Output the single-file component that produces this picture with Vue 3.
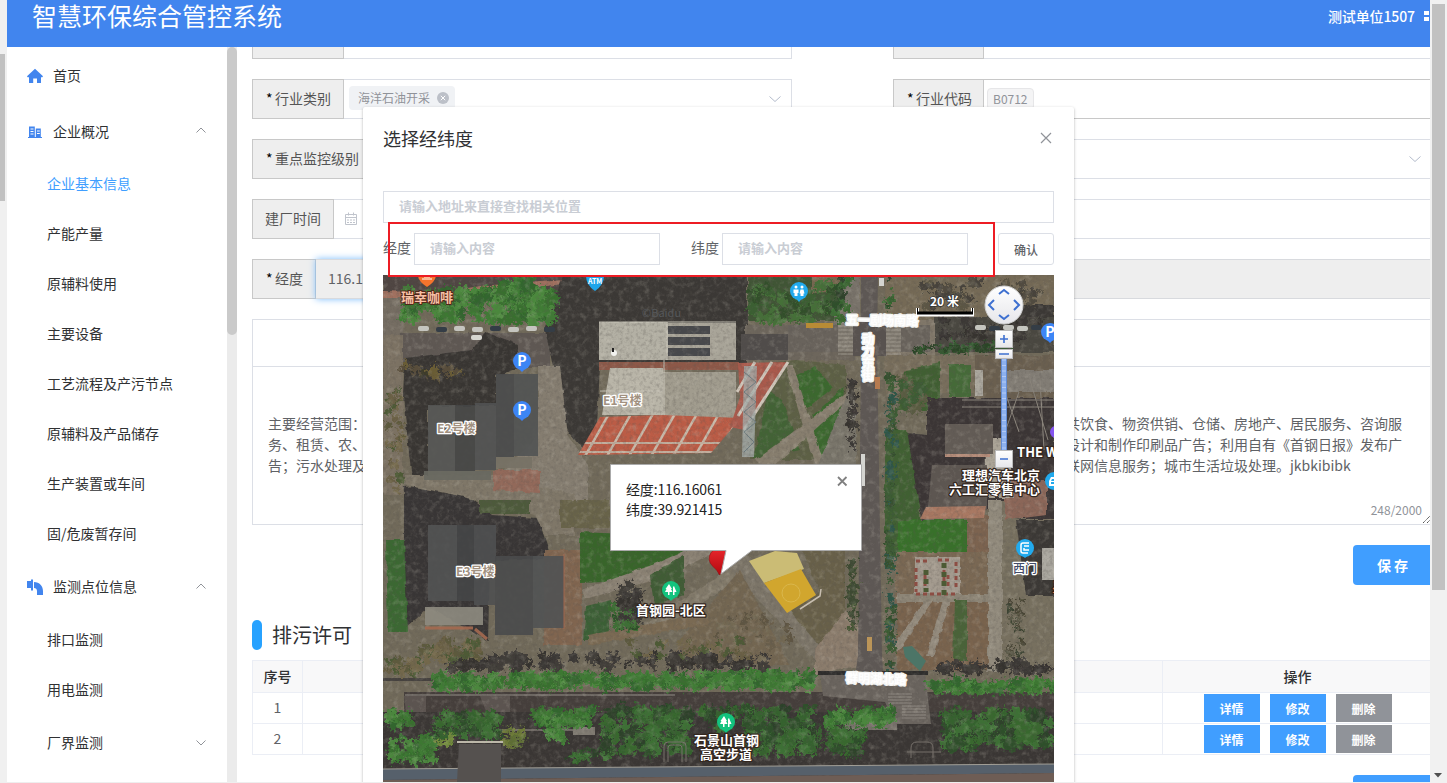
<script setup>
const menu = [
  { text: '首页', kind: 'top', icon: 'home' },
  { text: '企业概况', kind: 'top', icon: 'building', arrow: 'up' },
  { text: '企业基本信息', kind: 'sub', active: true },
  { text: '产能产量', kind: 'sub' },
  { text: '原辅料使用', kind: 'sub' },
  { text: '主要设备', kind: 'sub' },
  { text: '工艺流程及产污节点', kind: 'sub' },
  { text: '原辅料及产品储存', kind: 'sub' },
  { text: '生产装置或车间', kind: 'sub' },
  { text: '固/危废暂存间', kind: 'sub' },
  { text: '监测点位信息', kind: 'top', icon: 'pipe', arrow: 'up' },
  { text: '排口监测', kind: 'sub' },
  { text: '用电监测', kind: 'sub' },
  { text: '厂界监测', kind: 'sub', arrow: 'down', tall: true },
]

const scope = [
  ['主要经营范围：', '共饮食、物资供销、仓储、房地产、居民服务、咨询服'],
  ['务、租赁、农、', '设计和制作印刷品广告；利用自有《首钢日报》发布广'],
  ['告；污水处理及', '联网信息服务；城市生活垃圾处理。jkbkibibk'],
]

let seed = 7
function rnd() {
  seed = (seed * 16807) % 2147483647
  return seed / 2147483647
}

// [x, y, w, h, count, radius, colours]
function scatter(list) {
  const out = []
  for (const [x, y, w, h, n, r, colours] of list) {
    for (let i = 0; i < n; i++) {
      out.push({
        x: (x + rnd() * w).toFixed(1),
        y: (y + rnd() * h).toFixed(1),
        r: (r * (0.5 + rnd() * 0.6)).toFixed(1),
        c: colours[Math.floor(rnd() * colours.length)],
      })
    }
  }
  return out
}

const green = ['#38702f', '#417c36', '#33662d', '#4b883e', '#3c7833']
const deep = ['#2f4f2b', '#36622f', '#3d7034', '#2d432b', '#38682f']
const shade = ['#35312f', '#3b3735', '#403c39']
const dry = ['#6b6045', '#5d5a3c', '#73684c', '#4d5a36']

const trees = scatter([
  [402, 290, 62, 30, 70, 6, green],
  [470, 290, 84, 32, 80, 7, green],
  [498, 279, 34, 18, 22, 7, green],
  [750, 285, 84, 36, 56, 6, ['#3a5f30', '#33502b', '#456f38']],
  [835, 280, 14, 40, 16, 5, deep],
  [388, 660, 40, 14, 20, 5, dry],
  [418, 640, 60, 22, 36, 6, dry],
  [450, 655, 320, 14, 90, 6, shade],
  [434, 675, 70, 13, 70, 5, green],
  [510, 674, 86, 13, 86, 5, green],
  [600, 674, 90, 13, 86, 5, green],
  [694, 674, 122, 13, 120, 5, green],
  [388, 713, 22, 14, 24, 5, green],
  [390, 738, 46, 24, 60, 5, green],
  [435, 714, 64, 22, 64, 6, deep],
  [534, 710, 62, 15, 60, 5, green],
  [546, 730, 20, 14, 14, 5, green],
  [505, 728, 18, 18, 18, 4, ['#6d7a37', '#5f6f34']],
  [436, 736, 20, 8, 10, 4, ['#728c3b']],
  [568, 752, 28, 8, 12, 4, deep],
  [604, 708, 86, 46, 130, 6, deep],
  [700, 708, 42, 20, 36, 5, deep],
  [745, 708, 72, 44, 120, 6, deep],
  [825, 708, 68, 16, 60, 5, green],
  [828, 730, 36, 24, 40, 5, deep],
  [935, 662, 119, 10, 50, 5, shade],
  [928, 681, 126, 11, 100, 5, green],
  [945, 712, 106, 34, 160, 7, deep],
  [886, 278, 6, 40, 10, 3, deep],
  [888, 370, 6, 300, 100, 4, ['#35502f', '#2f5648', '#3c5b34']],
  [850, 380, 5, 70, 22, 4, shade],
  [850, 560, 5, 70, 24, 4, ['#4b5a38', '#3c4a30']],
  [612, 602, 24, 26, 26, 5, deep],
  [620, 585, 22, 34, 26, 5, shade],
  [400, 365, 60, 12, 26, 4, ['#584e3a', '#6b5d34', '#3c3b2c']],
  [388, 390, 14, 100, 30, 4, dry],
  [910, 345, 100, 8, 42, 4, ['#345a30', '#2c4428']],
  [940, 318, 100, 22, 42, 5, shade],
  [920, 282, 120, 26, 44, 5, ['#514c3f', '#46433a', '#5c5644']],
  [900, 380, 24, 30, 30, 5, ['#3e5b34', '#5a5c42']],
  [1008, 600, 14, 56, 34, 3, ['#484534', '#5c5a48', '#3a4330']],
  [715, 615, 76, 44, 34, 4, ['#6a5f4c', '#5f5542', '#736953']],
  [630, 640, 120, 16, 30, 4, dry],
])

const cars = []
for (const [x0, y, n, step] of [[418, 326, 8, 18], [975, 325, 5, 14]]) {
  for (let i = 0; i < n; i++) {
    cars.push({ x: x0 + i * step, y: y + (i % 2), c: i % 3 === 1 ? '#343d46' : '#c5c5bf' })
  }
}
const roofBars = [0, 1, 2, 3, 4, 5, 6]
const zebra = Array.from({ length: 9 }, (_, i) => i)
const ticks = Array.from({ length: 17 }, (_, i) => i)
const tableRows = [1, 2]
</script>

<template>
  <div class="page">
    <div class="left-gutter"><i class="gutter-thumb"></i></div>
    <div class="app">
      <header class="header">
        <h1>智慧环保综合管控系统</h1>
        <div class="user">
          <span>测试单位1507</span>
          <svg width="6" height="12" viewBox="0 0 6 12"><path d="M0 1h5v4H0zM0 7h5v4H0z" fill="#fff" /></svg>
        </div>
      </header>

      <div class="body">
        <nav class="side">
          <div
            v-for="m in menu"
            :key="m.text"
            :class="['item', m.kind, { active: m.active, tall: m.tall }]"
          >
            <svg v-if="m.icon === 'home'" class="ico" viewBox="0 0 16 16"><path d="M8 .8 16 8.3l-.7.9H14V15h-4v-4.5H6.2V15H2V9.200H.6L0 8.300z" fill="#4285ee" /></svg>
            <svg v-else-if="m.icon === 'building'" class="ico" viewBox="0 0 16 16">
              <path d="M2 2.500h5.800V13H2zM8.800 4.500h5V13h-5zM1 13h14v1H1z" fill="#4285ee" />
              <path d="M3.500 5h3M3.500 7.500h3M3.500 10h3M10 7h2.800M10 9.500h2.800" stroke="#fff" />
            </svg>
            <svg v-else-if="m.icon === 'pipe'" class="ico" viewBox="0 0 16 16"><path d="M0 2h4V.5h2v11H4V9H0zM7 3c5.500 0 9 4 9 9v4h-6v-4c0-1.800-1.200-3-3-3z" fill="#4285ee" /></svg>
            <span>{{ m.text }}</span>
            <svg v-if="m.arrow" class="arrow" viewBox="0 0 12 12">
              <path :d="m.arrow === 'up' ? 'M1.500 7.500 6 3l4.500 4.500' : 'M1.500 3.500 6 8l4.500-4.500'" fill="none" stroke="#909399" />
            </svg>
          </div>
        </nav>
        <div class="side-track"><i></i></div>

        <main class="content">
          <div class="form">
            <div class="row cut"><div class="label w92"></div><div class="field"></div></div>
            <div class="row cut"><div class="label w91"></div><div class="field"></div></div>

            <div class="row">
              <div class="label w92"><b>*</b>行业类别</div>
              <div class="field">
                <span class="tag">海洋石油开采
                  <svg width="12" height="12" viewBox="0 0 12 12"><circle cx="6" cy="6" r="6" fill="#bcc0c8" /><path d="M3.800 3.800l4.400 4.400M8.200 3.800l-4.400 4.400" stroke="#fff" /></svg>
                </span>
                <svg class="caret" viewBox="0 0 12 12"><path d="M.5 3.500 6 8.500l5.500-5" fill="none" stroke="#b4bccc" /></svg>
              </div>
            </div>
            <div class="row">
              <div class="label w91"><b>*</b>行业代码</div>
              <div class="field dark"><span class="tag plain">B0712</span></div>
            </div>

            <div class="row"><div class="label w120"><b>*</b>重点监控级别</div><div class="field"></div></div>
            <div class="row">
              <div class="label w91"></div>
              <div class="field">
                <svg class="caret" viewBox="0 0 12 12"><path d="M.5 3.500 6 8.500l5.500-5" fill="none" stroke="#b4bccc" /></svg>
              </div>
            </div>

            <div class="row">
              <div class="label w82">建厂时间</div>
              <div class="field">
                <svg class="cal" viewBox="0 0 14 14"><path d="M1.500 2.500h11v10h-11zM1.500 5.500h11M4.500 .500v3M9.500 .500v3M3 8h2M6 8h2M9 8h2M3 10.500h2M6 10.500h2M9 10.500h2" fill="none" stroke="#c0c4cc" /></svg>
              </div>
            </div>
            <div class="row"><div class="label w91"></div><div class="field"></div></div>

            <div class="row"><div class="label w64"><b>*</b>经度</div><div class="field grey glow">116.16061</div></div>
            <div class="row"><div class="label w64"></div><div class="field grey"></div></div>
          </div>

          <section class="scope">
            <div class="scope-head"></div>
            <div class="scope-text">
              <p v-for="line in scope" :key="line[0]"><span>{{ line[0] }}</span><span class="tail">{{ line[1] }}</span></p>
            </div>
            <span class="count">248/2000</span>
            <svg class="grip" viewBox="0 0 8 8"><path d="M0 8l8-8M4 8l4-4" stroke="#555" stroke-dasharray="1.400 .4" /></svg>
          </section>

          <button class="save">保存</button>
          <h2 class="section-title"><i></i>排污许可</h2>

          <div class="table">
            <div class="tr th"><div>序号</div><div></div><div>操作</div></div>
            <div v-for="n in tableRows" :key="n" class="tr">
              <div>{{ n }}</div><div></div>
              <div class="ops"><button>详情</button><button>修改</button><button class="del">删除</button></div>
            </div>
          </div>
          <button class="save next"></button>
        </main>
      </div>
    </div>
    <div class="right-scroll"><i></i><svg viewBox="0 0 8 5"><path d="M0 0h8L4 4.500z" fill="#505050" /></svg></div>

    <div class="dialog">
      <div class="dialog-head">
        <span>选择经纬度</span>
        <svg width="12" height="12" viewBox="0 0 12 12"><path d="M1 1l10 10M11 1 1 11" stroke="#909399" stroke-width="1.200" /></svg>
      </div>
      <div class="input addr">请输入地址来直接查找相关位置</div>
      <div class="coords">
        <label>经度</label><div class="input">请输入内容</div>
        <label class="lat">纬度</label><div class="input">请输入内容</div>
        <button>确认</button>
      </div>

      <svg class="map" viewBox="383 275 671 507">
        <defs>
          <filter id="grain" x="0" y="0" width="100%" height="100%">
            <feTurbulence type="fractalNoise" baseFrequency="0.300" numOctaves="3" seed="4" />
            <feColorMatrix values="0 0 0 0 .1  0 0 0 0 .09  0 0 0 0 .08  2.200 0 0 0 -.950" />
          </filter>
          <filter id="light" x="0" y="0" width="100%" height="100%">
            <feTurbulence type="fractalNoise" baseFrequency="0.160" numOctaves="4" seed="11" />
            <feColorMatrix values="0 0 0 0 .78  0 0 0 0 .74  0 0 0 0 .64  0 2.400 0 0 -1.200" />
          </filter>
          <filter id="rough" x="-5%" y="-5%" width="110%" height="110%">
            <feTurbulence type="fractalNoise" baseFrequency="0.120" numOctaves="2" seed="3" />
            <feDisplacementMap in="SourceGraphic" scale="4" xChannelSelector="R" yChannelSelector="G" />
          </filter>
          <filter id="leaf" x="-5%" y="-5%" width="110%" height="110%">
            <feTurbulence type="fractalNoise" baseFrequency="0.260" numOctaves="3" seed="8" />
            <feDisplacementMap in="SourceGraphic" scale="13" xChannelSelector="R" yChannelSelector="G" />
          </filter>
          <linearGradient id="pin" x1="0" x2="0" y1="0" y2="1"><stop offset="0" stop-color="#e8272d" /><stop offset="1" stop-color="#b3090e" /></linearGradient>
          <linearGradient id="knob" x1="0" x2="0" y1="0" y2="1"><stop offset="0" stop-color="#fff" /><stop offset="1" stop-color="#e6e6ea" /></linearGradient>
          <clipPath id="redroof"><path d="M600 417l63-2 78 3-30 35-133 2z" /></clipPath>
        </defs>

        <rect x="383" y="275" width="671" height="507" fill="#716a5a" />

        <g filter="url(#rough)">
          <!-- north-west block -->
          <path d="M383 275h180v22H383z" fill="#504542" />
          <path d="M383 291l60 2 50-8 70-6v5l-70 8-50 8-60-2z" fill="#a0705f" />
          <path d="M383 298h20v40h-20z" fill="#756d62" />
          <path d="M400 333h150v34H400z" fill="#5f5953" />
          <path d="M383 335h20v160h-20z" fill="#7b7263" />
          <path d="M563 275h184v90H600l-3 60-10 30-20-25-22-100z" fill="#3a3735" />
          <path d="M473 350l12-18 33 12v24l-22 8v30h-68v70l-16 5-9-85 2-38z" fill="#393533" />
          <path d="M538 366h22l8 70 20 30v40h-90v-30l40-40z" fill="#857d6f" />
          <path d="M404 487l48-4 40 32 46 3 12 36-8 5-52 2-2 80-60-34-24 22z" fill="#393634" />
          <path d="M405 475h90l80 20v40h-30l-10-20-80-20-50-10z" fill="#7f7768" />
          <path d="M493 470h47v23l-47-3z" fill="#92695a" />
          <path d="M560 500h50v28h-50z" fill="#67634a" />
          <path d="M480 500h50v14h-50z" fill="#4d5a3a" />
          <path d="M386 540h18l4 92h-20z" fill="#3a6831" />
          <path d="M544 550h38v95h-38z" fill="#80654f" />
          <path d="M580 532l140 6-30 24-60 19-50 2z" fill="#38652c" />
          <path d="M582 590l70-25 70-30 3 12-60 30-80 22z" fill="#8a8173" />
          <path d="M650 575l34-20v40l-30 10z" fill="#3f5c34" />
          <path d="M640 628l90-60 14 8-90 58z" fill="#827a6b" />
          <path d="M720 560l20-15 90 115-10 5z" fill="#7c7567" />
          <path d="M740 570l-60 70-10 25h120z" fill="#736651" />
          <path d="M583 640h25l3-40-25 6z" fill="#3b5f34" />
          <path d="M588 635l120-22v12l-120 20z" fill="#7a6a52" />
          <!-- plaza wedge -->
          <path d="M750 365l46-5 50 5v95h-96z" fill="#5d6145" />
          <path d="M795 376l20-10 18 22-26 20zM812 416l31-28-4 48-20 34z" fill="#3b682f" />
          <path d="M768 390l14 10 18 50-46 10z" fill="#436334" />
          <path d="M785 365h8l33 105h-10z" fill="#877e6e" />
          <path d="M755 460l95-70v8l-80 72z" fill="#877e6e" />
          <path d="M818 465l30-75 8 5v75z" fill="#79756a" />
          <path d="M745 325h110v35H745z" fill="#6d665c" />
          <path d="M748 275h90v46h-90z" fill="#415435" />
          <path d="M812 275h34v16l-34 2z" fill="#77674f" />
          <path d="M846 275h14v60h-30z" fill="#79736b" />
          <path d="M800 545l45 2v70l-25 30-33-40 33-15z" fill="#676149" />
          <path d="M815 650l30-40 40 50-70 15z" fill="#8b7b6c" />
          <!-- north-east -->
          <path d="M885 275h169v50H885z" fill="#746a57" />
          <path d="M1005 305h49v14h-49z" fill="#3a3735" />
          <path d="M885 320h50v45h-50z" fill="#807769" />
          <path d="M935 317h119v35H935z" fill="#4a4741" />
          <path d="M885 355h90v38h-90z" fill="#786e5b" />
          <path d="M903 371l37-9v48h-42z" fill="#415e33" />
          <path d="M949 365h22v32h-22z" fill="#446b38" />
          <path d="M975 355h79v45h-79z" fill="#6b5e4f" />
          <path d="M1000 370h54v22h-54z" fill="#827d75" />
          <path d="M927 398h127v110H950l-27 12-18-60V433l22 2z" fill="#3a3534" />
          <path d="M885 430h22l14 90h46v34h-82z" fill="#3f6132" />
          <path d="M898 520h69v33h-69z" fill="#37702c" />
          <path d="M967 515h23v40h-23z" fill="#7c634f" />
          <path d="M895 552h96v50h-96z" fill="#7a6852" />
          <path d="M915 557h45v40h-45z" fill="#a39a8e" />
          <path d="M897 600h92v70h-92z" fill="#79634d" />
          <path d="M925 600h8l-35 52-6-4zM943 600h8l-18 56h-7z" fill="#938a7c" />
          <path d="M897 594h95v8h-95z" fill="#8d8576" />
          <path d="M955 600h12v60h-14z" fill="#496339" />
          <path d="M988 500h14v172h-14z" fill="#918a7c" />
          <path d="M1002 500h52v170h-52z" fill="#77705f" />
          <path d="M1016 520h38v76h-28z" fill="#3b3735" />
          <path d="M1005 480h43v38h-43z" fill="#8b6659" />
          <path d="M1015 519h39v-28h-7v24z" fill="#3b3635" />
          <path d="M985 438h20l10 60h-28z" fill="#aba497" />
        </g>

        <!-- roads -->
        <path d="M861 275h17l-1 70 5 310 4 60h-36l8-60 3-300z" fill="#5e5855" />
        <path d="M788 325h142v27H788z" fill="#69635c" />
        <path d="M838 320h16v32h-16zM885 322h16v30h-16z" fill="#7f796f" />
        <path v-for="z in zebra" :key="'z' + z" :d="`M838 ${322 + z * 4}h15M886 ${322 + z * 4}h15`" stroke="#a09a8f" stroke-width="1" />
        <path d="M853 322h33v34h-33z" fill="#58524f" />

        <!-- east buildings -->
        <path d="M945 424h48v30h-48z" fill="#635c56" />
        <path d="M945 454h45v3h-45z" fill="#b68d7a" />
        <path d="M932 465h55v45l-60 7z" fill="#5d5651" />
        <path d="M926 507l60-1-2 12-64 1z" fill="#a87862" />
        <path d="M1042 548h12v32h-12z" fill="#aaa79f" />
        <path d="M975 370h8v26h-8z" fill="#aaa69d" />
        <path d="M962 400h92M962 407h92M1005 392l14 40M1019 392l-14 40M1040 380l4 70M1030 380l18 60" stroke="#8b857c" fill="none" />

        <!-- E1 roofs -->
        <path d="M599 322h69v38h-69z" fill="#b3b0a4" />
        <path d="M668 323h68v37h-68z" fill="#a8a498" />
        <path d="M668 326h42v8h-42zM668 337h42v8h-42zM668 348h42v8h-42z" fill="#47484b" />
        <path d="M599 362h140v8H599z" fill="#8d5848" />
        <path d="M610 368h53v47h-61z" fill="#b9b5a8" /><path d="M663 372h73v46h-73z" fill="#a19c8e" />
        <path d="M600 391h63M664 360v56M667 322v38M599 322h137" stroke="#c8c4b8" fill="none" />
        <path d="M741 334h47v26h-47z" fill="#504c4a" />
        <path d="M600 417l63-2 78 3-30 35-133 2z" fill="#bb5c46" />
        <g clip-path="url(#redroof)">
          <path v-for="b in roofBars" :key="'r' + b" :d="`M${610 + b * 22} 412l-26 46`" stroke="#c9b9a9" stroke-width="2.500" />
          <path d="M583 443h140M575 452h140" stroke="#c2ae9d" stroke-width="2" />
        </g>
        <path d="M738 363l50-1-44 68-14-3 10-30z" fill="#aa5a4c" />
        <path d="M788 362l-44 68M772 362l-34 54M755 362l-18 30" stroke="#d0c6ba" stroke-width="3" />
        <path d="M744 366h13l-3 91h-12z" fill="#a2aaa8" opacity=".8" />
        <path d="M744 372l12 10-12 10 12 10-12 10 12 10-12 10 10 10-10 10" stroke="#6d7c80" fill="none" />

        <!-- south side -->
        <path d="M383 678h50v3h-50z" fill="#45413e" />
        <path d="M404 692h650v24H404z" fill="#453e3b" />
        <path d="M404 696h22v30h-18zM480 696h30v20h-22z" fill="#5c5450" />
        <path d="M383 712h671v70H383z" fill="#3a3634" />
        <path d="M405 695h270M495 730h100" stroke="#6e6863" stroke-width="2" />
        <path d="M820 674h105l6 50H895l-10-22-62-6z" fill="#6a645e" />
        <path d="M818 671h110v4H818z" fill="#2e2d2c" />
        <path v-for="z in zebra" :key="'s' + z" :d="`M${z < 4 ? 888 : 902} ${694 + z * 3}h24`" stroke="#908a83" />
        <path d="M845 718h52v12h-52z" fill="#77716a" /><path d="M573 727h22v8h-22z" fill="#807b72" />

        <g filter="url(#leaf)">
          <circle v-for="(t, i) in trees" :key="i" :cx="t.x" :cy="t.y" :r="t.r" :fill="t.c" />
        </g>

        <rect x="383" y="275" width="671" height="507" filter="url(#grain)" opacity=".32" />
        <rect x="383" y="275" width="671" height="507" filter="url(#light)" opacity=".2" />

        <!-- E2 / E3 -->
        <g opacity=".9">
          <path d="M428 405h27v66h-27z" fill="#555655" /><path d="M455 405h20v66h-20z" fill="#454646" /><path d="M475 403h21v67h-21z" fill="#515253" />
          <path d="M496 374h18v84h-18z" fill="#4a4b4c" /><path d="M514 374h24v82h-24z" fill="#525454" />
          <path d="M424 471h67v9h-67z" fill="#696961" /><path d="M496 457h36v11h-36z" fill="#777266" />
          <path d="M428 525h29v76h-29z" fill="#535454" /><path d="M457 525h17v76h-17z" fill="#454647" /><path d="M474 525h22v80h-22z" fill="#4f5051" />
          <path d="M495 556h38v79h-38z" fill="#4a4b4c" /><path d="M533 556h31v72h-31z" fill="#515354" />
          <path d="M425 607h58v18h-58z" fill="#8e8b80" />
          <path d="M425 628h48M475 629l12 10" stroke="#a56a50" stroke-width="3" />
        </g>
        <path d="M564 554v75" stroke="#a0664e" />
        <circle cx="614" cy="353" r="3" fill="#f2f2ee" /><path d="M613 348v4" stroke="#222" stroke-width="2" />

        <path d="M383 769l671-5v9l-671 7z" fill="#56606b" />
        <path d="M383 780l671-7v9H383z" fill="#6e5d55" />
        <path d="M383 769l671-5" stroke="#a29f97" />
        <path d="M459 744h42v38h-44z" fill="#55514f" /><path d="M457 742h46" stroke="#bcb7a9" stroke-width="2" />
        <g fill="none" stroke="#77716b"><path d="M664 762v-16q0-4 4-4h14q4 0 4 4v16M668 762v-14q0-3 3-3h8q3 0 3 3v14M911 758v-10q0-6 6-6h10q6 0 6 6v10M907 752h34M898 722v-4h20v4" /></g>

        <!-- yellow court -->
        <path d="M749 561l26-10 22 2 7 16-40 14z" fill="#cbbc75" />
        <path d="M764 583l37-14 15 26-29 18z" fill="#d1a62e" />
        <circle cx="791" cy="593" r="9" fill="none" stroke="#dab74c" />
        <path d="M800 609l20-13 1-7" fill="none" stroke="#c7beb0" stroke-width="1.500" />

        <!-- plaza pattern -->
        <path d="M916 561h14M916 568v24M916 594h40M938 560h14M956 562v28M925 575v14M944 563v20M948 575v14" stroke="#8c4d43" stroke-width="3" stroke-dasharray="4 3" fill="none" />
        <path d="M944 563v32M926 570v22" stroke="#4c5a34" stroke-width="5" stroke-dasharray="5 4" />
        <path d="M903 647l9-1 14 15-6 10-15-14z" fill="#4c7567" />
        <g><rect v-for="(c, i) in cars" :key="'c' + i" :x="c.x" :y="c.y" width="11" height="5" rx="2" :fill="c.c" /></g>
        <rect x="471" y="335" width="11" height="5" rx="2" fill="#d6d6d0" />
        <rect x="806" y="323" width="27" height="5" fill="#b88b35" />
        <rect x="867" y="637" width="5" height="14" fill="#bb9558" />
        <rect x="875" y="377" width="5" height="12" fill="#b67b50" />
        <rect x="879" y="278" width="5" height="8" fill="#d4d4d0" />
        <path d="M863 454v32" stroke="#d4d4d0" stroke-width="4" />

        <!-- road names -->
        <g class="road">
          <text x="846" y="324" transform="rotate(1 846 324)">五一剧场南路</text>
          <text x="868" y="333" class="down">动力东街</text>
          <text x="846" y="682" transform="rotate(2 846 682)">群明湖北路</text>
        </g>
        <text x="642" y="317" class="mark">©Baidu</text>
        <g class="bldg"><text x="603" y="405">E1号楼</text><text x="437" y="433">E2号楼</text><text x="456" y="576">E3号楼</text></g>

        <!-- points of interest -->
        <path d="M418 276h18q-1 6-9 11-8-5-9-11z" fill="#f4742d" /><path d="M422 279h10M424 277h6" stroke="#fff" />
        <text x="401" y="302" class="cafe">瑞幸咖啡</text>
        <path d="M586 276h18q0 9-9 15-9-6-9-15z" fill="#1ea5ea" /><text x="588" y="284" class="atm">ATM</text>
        <g v-for="p in [[522, 361], [522, 410], [1050, 332]]" :key="p.join()">
          <path :d="`M${p[0] - 7} ${p[1] + 4}h14l-7 7z`" fill="#3b82f6" /><circle :cx="p[0]" :cy="p[1]" r="9" fill="#3d85f5" />
          <text :x="p[0]" :y="p[1] + 5" class="park">P</text>
        </g>
        <path d="M793 295h12l-6 7z" fill="#22aaed" /><circle cx="799" cy="291" r="9" fill="#22aaed" />
        <g fill="#fff"><circle cx="796" cy="287" r="1.500" /><circle cx="802" cy="287" r="1.500" /><path d="M793.500 289.500h5v3.500h-1v3h-3v-3h-1zM799.500 293.500l1-4h3l1 4h-1v2.500h-3v-2.500z" /></g>
        <g v-for="p in [[671, 590], [726, 722]]" :key="p.join()">
          <path :d="`M${p[0] - 6} ${p[1] + 5}h12l-6 6z`" fill="#13c37e" /><circle :cx="p[0]" :cy="p[1]" r="9" fill="#13c37e" />
          <path :d="`M${p[0] - 2} ${p[1] - 6}l3 5h-1l1.500 3h-3v3h-1.500v-3h-3l1.500-3h-1zM${p[0] + 3} ${p[1] - 4}l2.500 6h-2v3h-1.500v-8z`" fill="#fff" />
        </g>
        <path d="M1019 553h12l-6 5z" fill="#22aaed" /><circle cx="1025" cy="548" r="9" fill="#22aaed" /><path d="M1029 543h-6q-2 0-2 2v6q0 2 2 2h5M1024 546h5M1024 548v2h5" fill="none" stroke="#fff" stroke-width="1.500" />
        <circle cx="1056" cy="432" r="6" fill="#8555f0" />
        <circle cx="1054" cy="481" r="9" fill="#22aaed" /><path d="M1049 486v-5l2-4h4v2h-3l-1 2h4v1h-4v2h4v2z" fill="#fff" />
        <g class="place">
          <text x="636" y="615">首钢园-北区</text><text x="694" y="745">石景山首钢</text><text x="700" y="759">高空步道</text>
          <text x="1017" y="457">THE WI</text><text x="962" y="480">理想汽车北京</text><text x="949" y="494">六工汇零售中心</text>
        </g>
        <text x="1013" y="573" class="gate">西门</text>
        <text x="1052" y="592" class="edge">星</text>

        <!-- scale and zoom controls -->
        <text x="930" y="306" class="scale">20 米</text>
        <path d="M917.500 308v7h55v-7" fill="none" stroke="#fff" stroke-width="3" /><path d="M917.500 308v5h55v-5" fill="none" stroke="#000" /><path d="M917 313h56" stroke="#000" stroke-width="3" />
        <circle cx="1004" cy="305" r="19" fill="url(#knob)" stroke="#d2d2d2" />
        <path d="M999 294l5-4 5 4M999 315l5 4 5-4M994 300l-5 5 5 5M1014 300l5 5-5 5" fill="none" stroke="#3e70d0" stroke-width="2" />
        <rect x="1001.500" y="352" width="5" height="104" fill="#8db1ee" stroke="#638cd4" />
        <path v-for="t in ticks" :key="'t' + t" :d="`M1002 ${360 + t * 5.500}h4`" stroke="#b3cbf7" />
        <g fill="url(#knob)" stroke="#bbb"><rect x="995.500" y="330.500" width="17" height="17" /><rect x="995.500" y="349.500" width="17" height="9" /><rect x="995.500" y="450.500" width="17" height="17" /></g>
        <path d="M1000 339h8M1004 335v8M999 354h10M1000 459h8" stroke="#3e70d0" stroke-width="1.600" />

        <!-- marker and info window -->
        <path d="M719.500 575q-2-5-7-9a10 10 0 1 1 16-4q-4 8-9 13z" fill="url(#pin)" stroke="#8e1114" stroke-width=".6" />
        <path d="M610.500 464.500h251v86H752L721 574l5-23.500H610.500z" fill="#fff" stroke="#aaa" />
        <g class="info"><text x="626" y="495">经度:116.16061</text><text x="626" y="515">纬度:39.921415</text></g>
        <path d="M838 477l8.500 8.500M846.500 477l-8.500 8.500" stroke="#808080" stroke-width="1.800" />
      </svg>
      <div class="frame"></div>
    </div>
    <div class="bottom-line"></div>
  </div>
</template>

<style>
body { overflow: hidden; }
</style>

<style scoped>
.page {
  position: relative;
  display: flex;
  width: 1447px;
  height: 783px;
  overflow: hidden;
  background: #fff;
  color: #606266;
  font: 14px/20px "Noto Sans CJK SC", "Noto Sans", sans-serif;
}
.page *, .page *::before { box-sizing: border-box; }
h1, h2, p { margin: 0; font-weight: 400; }
button { font-family: inherit; padding: 0; border: 0; }
.left-gutter { width: 7px; background: #f0f0f0; }
.gutter-thumb { display: block; width: 5px; height: 147px; margin-top: 54px; background: #c1c1c1; }
.app { width: 1423px; overflow: hidden; display: flex; flex-direction: column; }
.header {
  height: 47px;
  flex: none;
  background: #4185ee;
  color: #fff;
  display: flex;
  justify-content: space-between;
  padding-left: 25px;
}
.header h1 { font-size: 25px; line-height: 31px; }
.user { display: flex; align-items: center; gap: 9px; height: 32px; font-weight: 500; }
.user span { letter-spacing: -.1px; }
.body { display: flex; flex: 1; min-height: 0; }
.side { width: 220px; padding-top: 1px; color: #303133; overflow: hidden; }
.item { display: flex; align-items: center; height: 50px; padding-left: 41px; }
.item span { margin: -2px 0 0 -1px; }
.item.top { height: 56px; padding-left: 20px; }
.item.top:nth-child(2) { height: 55px; }
.item.tall { height: 56px; }
.item.active { color: #409eff; }
.ico { width: 16px; height: 16px; margin-right: 11px; }
.arrow { width: 12px; height: 12px; margin: -1px 20px 0 auto; }
.side-track { width: 10px; background: #ebebeb; }
.side-track i { display: block; height: 288px; border-radius: 5px; background: #cacaca; }
.content { width: 1193px; padding-left: 15px; overflow: hidden; }
.form { display: grid; grid-template-columns: 540px 560px; column-gap: 101px; row-gap: 20px; }
.row { display: flex; height: 40px; }
.row.cut { height: 12px; }
.row.cut > * { border-top: 0; }
.label {
  flex: none;
  display: flex;
  align-items: center;
  padding: 0 0 2px 12px;
  border: 1px solid #c8c8c8;
  background: #eee;
  color: #555;
}
.label b { width: 10px; padding-left: 1px; margin-top: -1px; color: #000; font-weight: 400; }
.w92 { width: 92px; } .w91 { width: 91px; } .w82 { width: 82px; } .w64 { width: 64px; } .w120 { width: 120px; }
.field { flex: 1; display: flex; align-items: center; border: 1px solid #dcdfe6; border-left: 0; position: relative; }
.field.dark { border-color: #c8c8c8; }
.field.grey { background: #eee; border-color: #d8dade; padding: 0 0 2px 12px; }
.field.glow { box-shadow: 0 0 7px #7bbcfb; }
.tag {
  display: flex;
  align-items: center;
  gap: 7px;
  height: 24px;
  margin: -3px 0 0 5px;
  padding: 0 6px 0 9px;
  border-radius: 4px;
  background: #f0f2f5;
  color: #909399;
  font-size: 12px;
}
.tag.plain { height: 22px; margin: 0 0 0 3px; padding: 0 5px; background: #f4f4f5; border: 1px solid #e6e6e8; }
.caret { width: 12px; height: 12px; margin: 0 10px 0 auto; }
.row:nth-child(6) .caret { margin-right: 31px; }
.cal { width: 14px; height: 14px; margin-left: 10px; }
.scope { position: relative; width: 1201px; height: 206px; margin-top: 20px; border: 1px solid #dcdfe6; }
.scope-head { height: 47px; border-bottom: 1px solid #dcdfe6; }
.scope-text { padding: 46px 0 0 15px; }
.scope-text p { display: flex; line-height: 21px; white-space: nowrap; }
.scope-text span { width: 798px; }
.scope-text .tail { width: auto; }
.count { position: absolute; right: 30px; bottom: 4px; font-size: 12px; color: #909399; }
.grip { position: absolute; left: 1170px; bottom: 1px; width: 8px; height: 8px; }
.save {
  display: block;
  width: 90px;
  height: 40px;
  margin: 20px 0 0 1101px;
  padding: 0 0 1px 24px;
  border-radius: 4px;
  background: #409eff;
  color: #fff;
  font-size: 14px;
  font-weight: 700;
  letter-spacing: 3px;
  text-align: left;
}
.section-title { display: flex; align-items: center; gap: 10px; height: 30px; margin-top: 35px; padding-bottom: 0; font-size: 20px; color: #303133; }
.section-title i { width: 10px; height: 30px; border-radius: 5px; background: #27a2ff; }
.table { width: 1180px; margin-top: 10px; border: 1px solid #ebeef5; border-width: 1px 0 0 1px; }
.tr { display: grid; grid-template-columns: 50px 860px 270px; height: 31px; }
.tr > div { display: flex; align-items: center; justify-content: center; padding-bottom: 2px; border: 1px solid #ebeef5; border-width: 0 1px 1px 0; }
.tr.th { height: 32px; background: #f8f8f9; color: #303133; font-weight: 500; }
.tr > .ops { gap: 10px; padding-bottom: 0; }
.ops button { width: 56px; height: 28px; background: #409eff; color: #fff; font-size: 12px; font-weight: 700; }
.ops .del { background: #909399; }
.right-scroll { width: 17px; background: #f1f1f1; padding: 4px 2px 0; position: relative; }
.right-scroll i { display: block; height: 586px; width: 13px; background: #c1c1c1; }
.right-scroll svg { position: absolute; left: 4px; bottom: 5px; width: 8px; height: 5px; }
.dialog {
  position: absolute;
  left: 363px;
  top: 107px;
  width: 711px;
  height: 690px;
  padding: 0 20px;
  background: #fff;
  border-radius: 2px;
  box-shadow: 0 1px 3px rgba(0, 0, 0, .3);
}
.dialog-head { display: flex; align-items: center; justify-content: space-between; height: 62px; padding-right: 2px; font-size: 18px; color: #303133; }
.input { border: 1px solid #dcdfe6; height: 32px; line-height: 27px; padding-left: 15px; font-size: 13px; font-weight: 700; color: #c9cdd4; }
.addr { margin-top: 22px; }
.coords { display: flex; align-items: center; margin-top: 10px; }
.coords label { width: 31px; line-height: 28px; height: 32px; }
.coords .lat { margin-left: 31px; }
.coords .input { width: 246px; }
.coords button { width: 56px; height: 32px; margin-left: auto; border: 1px solid #dcdfe6; border-radius: 3px; background: #fff; color: #606266; font-size: 12px; font-weight: 500; }
.map { display: block; width: 671px; height: 507px; margin-top: 10px; }
.map text { font-family: "Noto Sans CJK SC", sans-serif; font-size: 12px; paint-order: stroke; stroke-linejoin: round; }
.road text { font-weight: 700; fill: #fff; stroke: #f4f4f2; stroke-width: 3px; }
.road .down { writing-mode: vertical-rl; }
.map .mark { fill: #56585a; font-size: 11px; }
.bldg text { fill: #a29180; stroke: #fff; stroke-width: 2.500px; font-weight: 700; }
.map .cafe { font-size: 13px; font-weight: 700; fill: #f7c0a5; stroke: #52271a; stroke-width: 2px; }
.map .atm { font-size: 7px; font-weight: 700; fill: #fff; }
.map .park { font-size: 14px; font-weight: 700; fill: #fff; text-anchor: middle; }
.place text { font-size: 13px; font-weight: 700; fill: #fff; stroke: #33261e; stroke-width: 2.500px; }
.map .gate { font-size: 12px; font-weight: 500; fill: #424b68; stroke: #fff; stroke-width: 2.500px; }
.map .edge { fill: #ff945a; stroke: #3a1c10; stroke-width: 2px; }
.map .scale { font-weight: 700; fill: #fff; stroke: #333; stroke-width: 1.500px; }
.info text { font-size: 14px; fill: #222; letter-spacing: -.15px; }
.frame { position: absolute; left: 25px; top: 115px; width: 607px; height: 55px; border: 2px solid #ed1c24; }
.bottom-line { position: absolute; left: 0; bottom: 0; width: 1430px; height: 1px; background: #eee; }
</style>
